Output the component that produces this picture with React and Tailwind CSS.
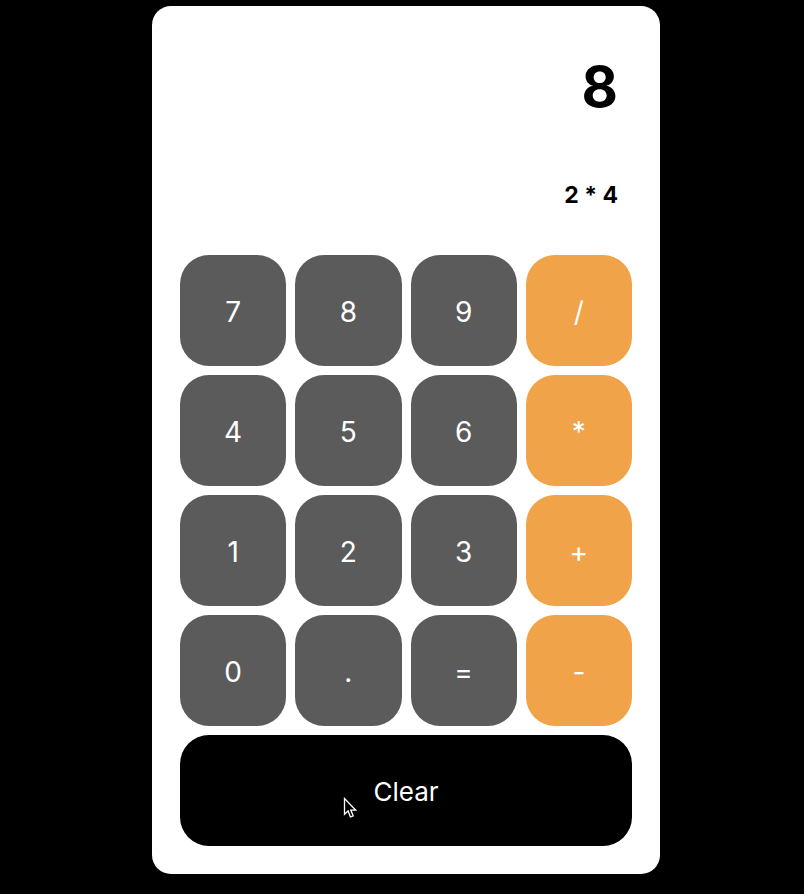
import { useState } from "react";

const keys = ["7", "8", "9", "/", "4", "5", "6", "*", "1", "2", "3", "+", "0", ".", "=", "-"];
const operators = ["/", "*", "+", "-"];

function compute(expression) {
  const parts = expression.split(" ").filter(Boolean);
  let total = Number(parts[0] || 0);
  for (let i = 1; i + 1 < parts.length; i += 2) {
    const value = Number(parts[i + 1]);
    if (parts[i] === "+") total += value;
    if (parts[i] === "-") total -= value;
    if (parts[i] === "*") total *= value;
    if (parts[i] === "/") total /= value;
  }
  return String(total);
}

function Key({ label, className, onPress }) {
  return (
    <button
      type="button"
      onClick={() => onPress(label)}
      className={`h-[111px] cursor-pointer rounded-[29px] pt-[2px] font-normal text-white ${className}`}
    >
      {label}
    </button>
  );
}

function Pointer() {
  return (
    <svg
      aria-hidden="true"
      viewBox="0 0 14 22"
      className="pointer-events-none absolute top-[62px] left-[163px] h-[22px] w-[14px]"
    >
      <path
        d="M1.5 1.5V17.2L5.1 13.9L7.4 20L10.2 18.9L7.8 13.1H12.6Z"
        fill="black"
        stroke="white"
        strokeWidth="1.3"
        strokeLinejoin="miter"
      />
    </svg>
  );
}

export default function App() {
  const [expression, setExpression] = useState("2 * 4");
  const [result, setResult] = useState("8");

  function press(key) {
    if (key === "=") setResult(compute(expression));
    else if (operators.includes(key)) setExpression(`${expression} ${key} `);
    else setExpression(expression + key);
  }

  function clear() {
    setExpression("");
    setResult("0");
  }

  return (
    <main className="min-h-screen bg-black pt-[6px] pb-5 pl-2 font-['Inter','Liberation_Sans',sans-serif]">
      <section className="mx-auto w-full max-w-[508px] rounded-[19px] bg-white px-7 pt-[49px] pb-7">
        <div className="flex flex-col gap-[60px] px-[14px] pb-11 text-right font-bold text-black">
          <output className="block h-16 text-[56px] leading-16">{result}</output>
          <p className="h-8 text-[23px] leading-8 [font-feature-settings:'calt'_0]">{expression}</p>
        </div>
        <div className="grid grid-cols-4 gap-[9px]">
          {keys.map((key) => (
            <Key
              key={key}
              label={key}
              onPress={press}
              className={
                operators.includes(key)
                  ? "bg-[#f0a348] text-[28px]"
                  : "bg-[#5b5b5b] text-[28px]"
              }
            />
          ))}
          <div className="relative col-span-4 grid">
            <Key label="Clear" onPress={clear} className="bg-black text-[26px]" />
            <Pointer />
          </div>
        </div>
      </section>
    </main>
  );
}
